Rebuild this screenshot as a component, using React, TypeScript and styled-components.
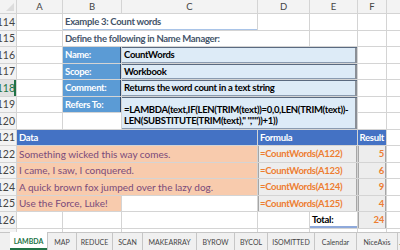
import React from "react";
import styled, { createGlobalStyle, css } from "styled-components";

const GlobalStyle = createGlobalStyle`
  html, body { margin: 0; padding: 0; background: #fff; overflow: hidden; }
  body { font-family: Lato, "Open Sans", sans-serif; }
`;

type P = { $r: number; $c: number; $rs?: number; $cs?: number };

const at = css<P>`
  grid-row: ${(p) => p.$r} / span ${(p) => p.$rs || 1};
  grid-column: ${(p) => p.$c} / span ${(p) => p.$cs || 1};
  min-width: 0;
  overflow: hidden;
  white-space: nowrap;
`;

// bold cell text: Lato bold runs wider than the sheet's font
const tight = css`
  font-weight: 700;
  font-size: 9.5px;
  letter-spacing: -0.3px;
`;

const Page = styled.div`
  width: 400px;
  height: 250px;
  display: flex;
  flex-direction: column;
  overflow: hidden;
`;

const Sheet = styled.div`
  height: 232px;
  overflow: hidden;
  display: grid;
  grid-template-columns: 16px 45px 58px 135px 51px 47px 28px 1fr;
  grid-template-rows: 13px repeat(14, 15.5px);
  gap: 1px;
  background: #d4d4d4;
  font-size: 10px;
`;

const Blank = styled.div<P>`
  ${at};
  background: #fff;
`;

const ColHead = styled.div<P>`
  ${at};
  background: #f3f3f3;
  color: #444;
  font-size: 9.5px;
  display: flex;
  align-items: center;
  justify-content: center;
`;

const Corner = styled.div<P>`
  ${at};
  background: #f3f3f3;
  position: relative;
  &::after {
    content: "";
    position: absolute;
    right: 2px;
    bottom: 2px;
    border-left: 8px solid transparent;
    border-bottom: 8px solid #dcdcdc;
  }
`;

const RowHead = styled.div<P & { $sel?: boolean }>`
  ${at};
  background: ${(p) => (p.$sel ? "#e1e1e1" : "#f3f3f3")};
  color: ${(p) => (p.$sel ? "#217346" : "#444")};
  box-shadow: ${(p) => (p.$sel ? "inset -2px 0 0 #217346" : "none")};
  font-size: 10.5px;
  display: flex;
  align-items: center;
  justify-content: flex-end;
  padding-right: 1px;
`;

const Title = styled.div<P & { $line?: boolean }>`
  ${at};
  ${tight};
  background: #fff;
  color: #44546a;
  display: flex;
  align-items: center;
  padding-left: 2px;
  box-shadow: ${(p) => (p.$line ? "inset 0 -1px 0 #a9c4e8" : "none")};
`;

const Label = styled.div<P>`
  ${at};
  ${tight};
  background: #5b9bd5;
  color: #fff;
  display: flex;
  align-items: center;
  padding-left: 2px;
  box-shadow: inset -1px 0 0 #2f4a6e;
`;

const Value = styled.div<P & { $multi?: boolean }>`
  ${at};
  ${tight};
  background: #ddebf7;
  color: #000;
  display: flex;
  flex-direction: column;
  justify-content: ${(p) => (p.$multi ? "flex-end" : "center")};
  line-height: ${(p) => (p.$multi ? "11px" : "normal")};
  padding: 0 0 ${(p) => (p.$multi ? "3px" : "0")} 2px;
  box-shadow: inset 0 1px 0 #5a6a80, inset -2px 0 0 #8a8f96, inset 0 -1px 0 #8a9bb0;
`;

const Band = styled.div<P & { $align?: string }>`
  ${at};
  ${tight};
  background: #4472c4;
  color: #fff;
  display: flex;
  align-items: center;
  justify-content: ${(p) => p.$align || "flex-start"};
  padding: 0 2px;
`;

const DataCell = styled.div<P>`
  ${at};
  background: #f8cbad;
  color: #7a4a7a;
  display: flex;
  align-items: center;
  padding-left: 2px;
`;

const FormulaCell = styled.div<P & { $right?: boolean }>`
  ${at};
  ${tight};
  background: #ededed;
  color: #ed7d31;
  display: flex;
  align-items: center;
  justify-content: ${(p) => (p.$right ? "flex-end" : "flex-start")};
  padding: 0 2px;
  box-shadow: inset 1px 0 0 #a6a6a6, inset -1px 0 0 #a6a6a6;
`;

const TotalCell = styled.div<P>`
  ${at};
  ${tight};
  background: #fff;
  color: #000;
  display: flex;
  align-items: center;
  padding-left: 2px;
  box-shadow: inset 0 -2px 0 #8ea9db;
`;

const TabBar = styled.div`
  height: 18px;
  background: #f0f0f0;
  border-top: 1px solid #c6c6c6;
  display: flex;
  align-items: stretch;
  padding-left: 10px;
  box-sizing: border-box;
  font-size: 7px;
  color: #444;
`;

const Tab = styled.div<{ $w: number; $active?: boolean }>`
  width: ${(p) => p.$w}px;
  box-sizing: border-box;
  flex: none;
  display: flex;
  align-items: center;
  justify-content: center;
  border-right: 1px solid #c6c6c6;
  background: ${(p) => (p.$active ? "#fff" : "transparent")};
  color: ${(p) => (p.$active ? "#217346" : "#444")};
  font-weight: ${(p) => (p.$active ? 700 : 400)};
  box-shadow: ${(p) => (p.$active ? "inset 0 -2px 0 #217346" : "none")};
  margin-top: ${(p) => (p.$active ? "-1px" : "0")};
`;

const More = styled.div`
  display: flex;
  align-items: center;
  padding-left: 1px;
  color: #217346;
`;

const cols = ["", "A", "B", "C", "D", "E", "F", ""];
const firstRow = 114;
const nRows = 14;

const data = [
  { text: "Something wicked this way comes.", res: 5, wide: true },
  { text: "I came, I saw, I conquered.", res: 6, wide: true },
  { text: "A quick brown fox jumped over the lazy dog.", res: 9, wide: true },
  { text: "Use the Force, Luke!", res: 4, wide: false },
];

const tabs = [
  { name: "LAMBDA", w: 38 },
  { name: "MAP", w: 29 },
  { name: "REDUCE", w: 36 },
  { name: "SCAN", w: 30 },
  { name: "MAKEARRAY", w: 54 },
  { name: "BYROW", w: 38 },
  { name: "BYCOL", w: 33 },
  { name: "ISOMITTED", w: 47 },
  { name: "Calendar", w: 42 },
  { name: "NiceAxis", w: 41 },
];

export default function App() {
  const grid: React.ReactNode[] = [];
  for (let c = 1; c <= 8; c++) {
    if (c === 1) grid.push(<Corner key="corner" $r={1} $c={1} />);
    else grid.push(<ColHead key={"h" + c} $r={1} $c={c}>{cols[c - 1]}</ColHead>);
  }
  for (let i = 0; i < nRows; i++) {
    const r = i + 2;
    const num = firstRow + i;
    grid.push(
      <RowHead key={"r" + r} $r={r} $c={1} $sel={num === 118}>
        {num}
      </RowHead>
    );
    for (let c = 2; c <= 8; c++) grid.push(<Blank key={`b${r}-${c}`} $r={r} $c={c} />);
  }

  return (
    <Page>
      <GlobalStyle />
      <Sheet>
        {grid}
        <Title $r={2} $c={3} $cs={2} $line>Example 3: Count words</Title>
        <Title $r={3} $c={3} $cs={3}>Define the following in Name Manager:</Title>

        <Label $r={4} $c={3}>Name:</Label>
        <Value $r={4} $c={4} $cs={3}>CountWords</Value>
        <Label $r={5} $c={3}>Scope:</Label>
        <Value $r={5} $c={4} $cs={3}>Workbook</Value>
        <Label $r={6} $c={3}>Comment:</Label>
        <Value $r={6} $c={4} $cs={3}>Returns the word count in a text string</Value>
        <Label $r={7} $c={3}>Refers To:</Label>
        <Value $r={7} $c={4} $cs={3} $rs={2} $multi>
          <span>=LAMBDA(text,IF(LEN(TRIM(text))=0,0,LEN(TRIM(text))-</span>
          <span>LEN(SUBSTITUTE(TRIM(text),&quot; &quot;,&quot;&quot;))+1))</span>
        </Value>

        <Band $r={9} $c={2} $cs={3}>Data</Band>
        <Band $r={9} $c={5} $cs={2}>Formula</Band>
        <Band $r={9} $c={7} $align="flex-end">Result</Band>

        {data.map((d, i) => (
          <React.Fragment key={i}>
            <DataCell $r={10 + i} $c={2} $cs={d.wide ? 3 : 2}>{d.text}</DataCell>
            <FormulaCell $r={10 + i} $c={5} $cs={2}>=CountWords(A{122 + i})</FormulaCell>
            <FormulaCell $r={10 + i} $c={7} $right>{d.res}</FormulaCell>
          </React.Fragment>
        ))}

        <TotalCell $r={14} $c={6}>Total:</TotalCell>
        <FormulaCell $r={14} $c={7} $right>{data.reduce((s, d) => s + d.res, 0)}</FormulaCell>
      </Sheet>
      <TabBar>
        {tabs.map((t, i) => (
          <Tab key={t.name} $w={t.w} $active={i === 0}>{t.name}</Tab>
        ))}
        <More>…</More>
      </TabBar>
    </Page>
  );
}
